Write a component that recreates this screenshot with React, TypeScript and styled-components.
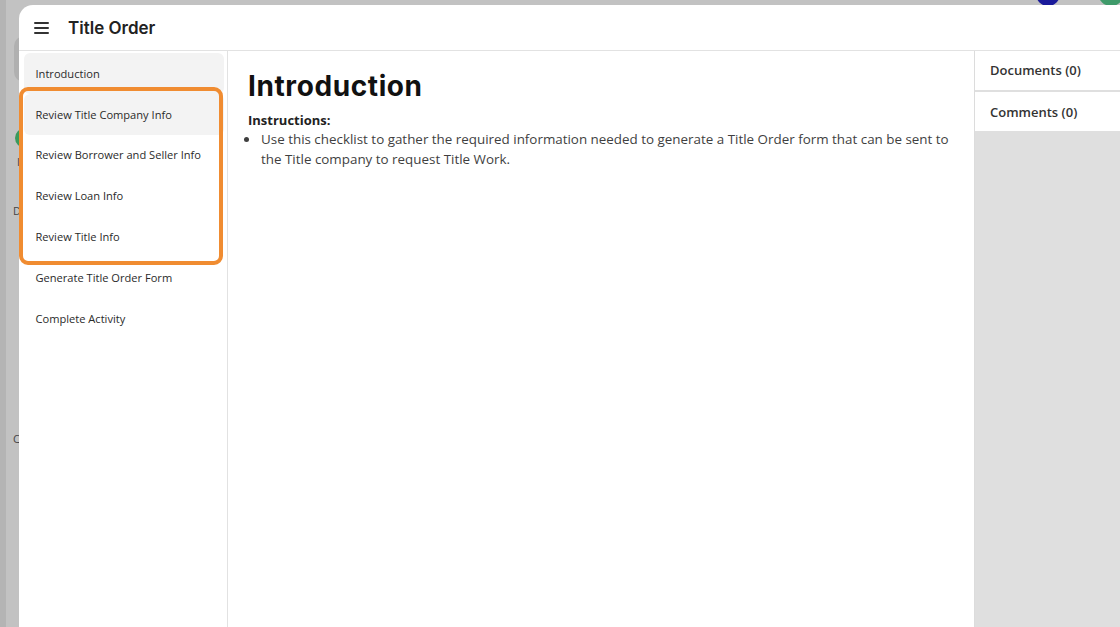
import styled, { createGlobalStyle } from "styled-components";

const GlobalStyle = createGlobalStyle`
  html, body {
    margin: 0;
    padding: 0;
    height: 100%;
    overflow: hidden;
  }
  body {
    background-color: #bcbcbc;
    font-family: "Open Sans", "Noto Sans", sans-serif;
  }
  #root {
    height: 100%;
  }
`;

const Backdrop = styled.div`
  position: relative;
  height: 627px;
  width: 1120px;
  overflow: hidden;
  background: linear-gradient(to right, #b4b4b4 0px, #b4b4b4 6px, #c2c2c2 6px);
`;

// bits of the app that peek out behind the modal
const BackCard = styled.div`
  position: absolute;
  left: 14px;
  top: 36px;
  width: 30px;
  height: 46px;
  border-radius: 10px;
  background: #b0b0b0;
`;
const BackDot = styled.div<{ $color: string; $x: number; $y: number; $size: number }>`
  position: absolute;
  left: ${(p) => p.$x}px;
  top: ${(p) => p.$y}px;
  width: ${(p) => p.$size}px;
  height: ${(p) => p.$size}px;
  border-radius: 50%;
  background: ${(p) => p.$color};
`;
const BackLetter = styled.span<{ $x: number; $y: number }>`
  position: absolute;
  left: ${(p) => p.$x}px;
  top: ${(p) => p.$y}px;
  font-size: 11px;
  color: #444;
`;

const Modal = styled.div`
  position: absolute;
  left: 19px;
  top: 5px;
  right: 0;
  bottom: 0;
  display: flex;
  flex-direction: column;
  background: #fff;
  border-top-left-radius: 14px;
  overflow: hidden;
`;

const Header = styled.header`
  display: flex;
  align-items: center;
  height: 45px;
  padding-left: 15px;
  border-bottom: 1px solid #e2e2e2;
  flex-shrink: 0;
`;
const MenuButton = styled.button`
  display: flex;
  flex-direction: column;
  justify-content: center;
  gap: 3px;
  width: 17px;
  height: 20px;
  padding: 0;
  margin-right: 17px;
  border: none;
  background: none;
  cursor: pointer;
  span {
    display: block;
    height: 2px;
    width: 15px;
    background: #333;
    border-radius: 1px;
  }
`;
const Title = styled.h1`
  margin: 0;
  font-family: "Inter", sans-serif;
  font-size: 17px;
  font-weight: 600;
  color: #222;
`;

const Body = styled.div`
  display: flex;
  flex: 1;
  min-height: 0;
`;

const Sidebar = styled.nav`
  position: relative;
  width: 209px;
  flex-shrink: 0;
  padding: 2px 3px 0 5px;
  box-sizing: border-box;
  border-right: 1px solid #e2e2e2;
  display: flex;
  flex-direction: column;
`;
const NavItem = styled.div<{ $active?: boolean }>`
  height: 40.8px;
  display: flex;
  align-items: center;
  padding-left: 11.5px;
  font-size: 11.1px;
  color: #2a2a2a;
  border-radius: 6px;
  background: ${(p) => (p.$active ? "#f3f3f3" : "transparent")};
  cursor: pointer;
`;
const Highlight = styled.div`
  position: absolute;
  left: 0;
  top: 36px;
  width: 204px;
  height: 178px;
  box-sizing: border-box;
  border: 4px solid #f08c31;
  border-radius: 9px;
  pointer-events: none;
`;

const Content = styled.main`
  flex: 1;
  padding: 18px 20px;
  border-right: 1px solid #dcdcdc;
`;
const Heading = styled.h2`
  margin: 0 0 8px;
  font-family: "Inter", sans-serif;
  font-size: 28px;
  font-weight: 700;
  color: #111;
  letter-spacing: 0.6px;
`;
const Label = styled.div`
  font-size: 13px;
  font-weight: 700;
  color: #222;
`;
const List = styled.ul`
  margin: 0;
  padding-left: 12px;
  li {
    font-size: 13.4px;
    line-height: 20px;
    color: #3f3f3f;
    padding-left: 1px;
  }
`;

const SidePanel = styled.aside`
  width: 145px;
  flex-shrink: 0;
  background: #dfdfdf;
  display: flex;
  flex-direction: column;
  gap: 2px;
`;
const PanelTab = styled.div<{ $first?: boolean }>`
  height: ${(p) => (p.$first ? "38px" : "39px")};
  display: flex;
  align-items: center;
  padding-left: 15px;
  padding-bottom: ${(p) => (p.$first ? "1px" : "0")};
  background: #fff;
  font-size: 13px;
  font-weight: 600;
  color: #333;
`;

const steps = [
  "Introduction",
  "Review Title Company Info",
  "Review Borrower and Seller Info",
  "Review Loan Info",
  "Review Title Info",
  "Generate Title Order Form",
  "Complete Activity",
];

export default function App() {
  return (
    <Backdrop>
      <GlobalStyle />
      <BackCard />
      <BackDot $color="#3a9a5c" $x={15} $y={128} $size={20} />
      <BackLetter $x={17} $y={154}>I</BackLetter>
      <BackLetter $x={13} $y={203}>D</BackLetter>
      <BackLetter $x={13} $y={431}>C</BackLetter>
      <BackDot $color="#1a1a9a" $x={1036} $y={-18} $size={24} />
      <BackDot $color="#3f9a6a" $x={1098} $y={-20} $size={26} />
      <Modal>
        <Header>
          <MenuButton aria-label="menu">
            <span />
            <span />
            <span />
          </MenuButton>
          <Title>Title Order</Title>
        </Header>
        <Body>
          <Sidebar>
            {steps.map((s, i) => (
              <NavItem key={s} $active={i < 2}>
                {s}
              </NavItem>
            ))}
            <Highlight />
          </Sidebar>
          <Content>
            <Heading>Introduction</Heading>
            <Label>Instructions:</Label>
            <List>
              <li>
                Use this checklist to gather the required information needed to generate a Title
                Order form that can be sent to the Title company to request Title Work.
              </li>
            </List>
          </Content>
          <SidePanel>
            <PanelTab $first>Documents (0)</PanelTab>
            <PanelTab>Comments (0)</PanelTab>
          </SidePanel>
        </Body>
      </Modal>
    </Backdrop>
  );
}
